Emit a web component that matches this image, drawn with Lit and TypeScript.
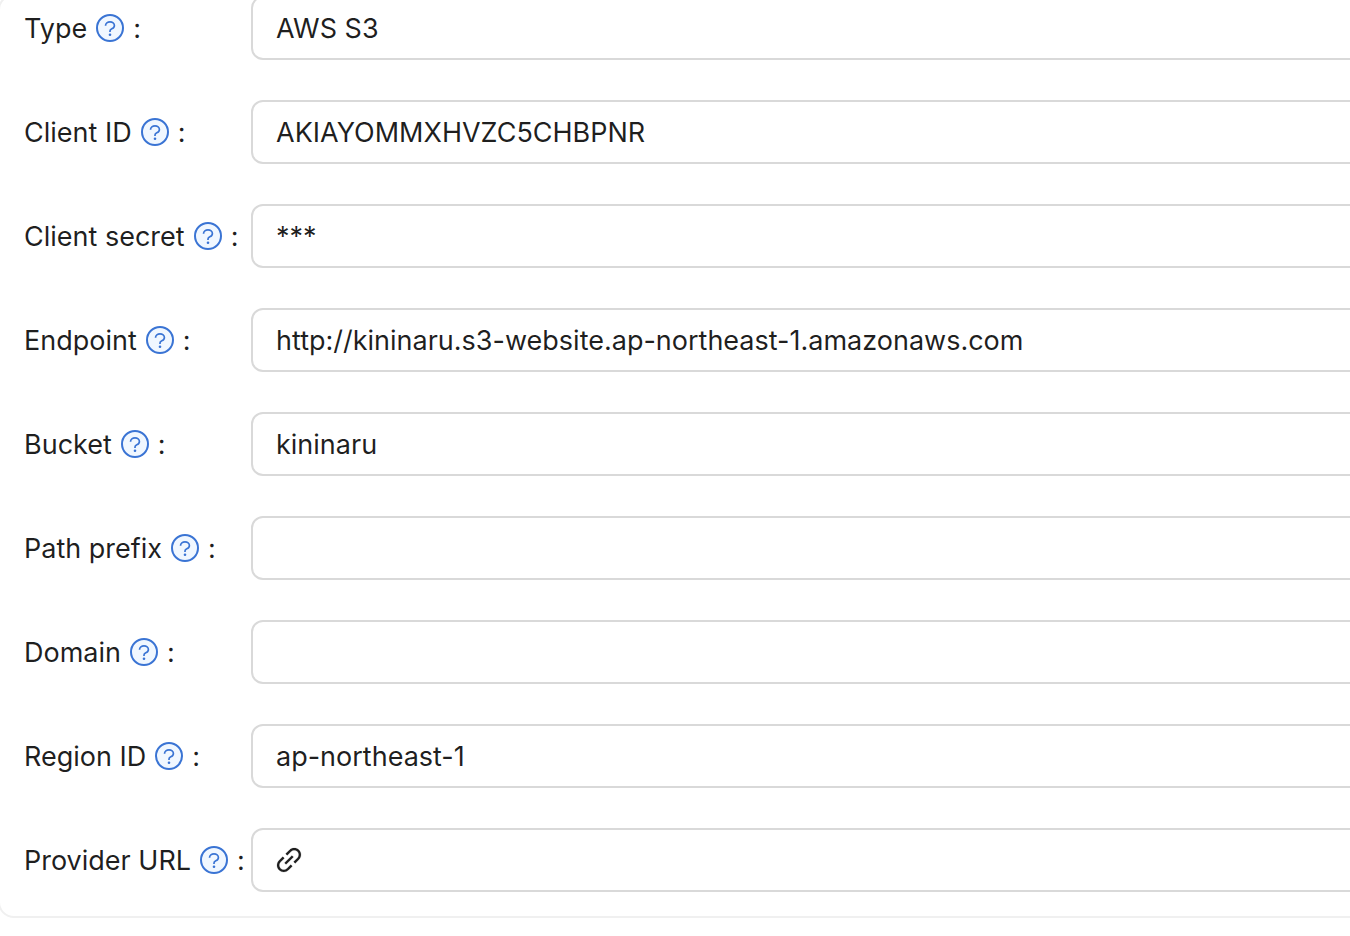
import { LitElement, html, css } from "lit";
import { customElement } from "lit/decorators.js";

interface Field {
  id: string;
  label: string;
  value: string;
  kind?: "select" | "link";
}

const FIELDS: Field[] = [
  { id: "type", label: "Type", value: "AWS S3", kind: "select" },
  { id: "client-id", label: "Client ID", value: "AKIAYOMMXHVZC5CHBPNR" },
  { id: "client-secret", label: "Client secret", value: "***" },
  { id: "endpoint", label: "Endpoint", value: "http://kininaru.s3-website.ap-northeast-1.amazonaws.com" },
  { id: "bucket", label: "Bucket", value: "kininaru" },
  { id: "path-prefix", label: "Path prefix", value: "" },
  { id: "domain", label: "Domain", value: "" },
  { id: "region-id", label: "Region ID", value: "ap-northeast-1" },
  { id: "provider-url", label: "Provider URL", value: "", kind: "link" },
];

@customElement("app-root")
export class AppRoot extends LitElement {
  static styles = css`
    :host {
      display: block;
      overflow: hidden;
      background: #fff;
      color: rgba(0, 0, 0, 0.88);
      font: 27px/45px Inter, "Liberation Sans", sans-serif;
    }
    .card {
      box-sizing: border-box;
      display: grid;
      gap: 40px;
      margin: -6px -24px 0 -2px;
      padding: 0 0 24px 24px;
      border: 2px solid #f0f0f0;
      border-radius: 16px;
    }
    .row {
      display: grid;
      grid-template-columns: 227px 1fr;
      align-items: center;
    }
    .label {
      display: flex;
      align-items: center;
      gap: 9px;
      white-space: nowrap;
    }
    .help {
      flex: none;
      display: block;
      width: 28px;
      height: 28px;
    }
    .box {
      box-sizing: border-box;
      display: flex;
      align-items: center;
      width: 100%;
      height: 64px;
      margin: 0;
      padding: 0 23px;
      border: 2px solid #d9d9d9;
      border-radius: 12px;
      background: #fff;
      color: inherit;
      font: inherit;
      outline: none;
      appearance: none;
    }
    .link {
      width: 26px;
      height: 28px;
    }
  `;

  private help() {
    return html`<svg class="help" viewBox="0 0 28 28" fill="none" aria-hidden="true">
      <circle cx="14" cy="14" r="13" fill="#f0f7ff" stroke="#3a74d4" stroke-width="2" />
      <path d="M9.600 11.700v-.4c0-2 2-3.400 4.400-3.400s4.400 1.500 4.400 3.600c0 1.500-1 2.700-2.600 3.300-1.200.5-1.800 1.200-1.800 2.300v1" stroke="#3a74d4" stroke-width="1.700" />
      <circle cx="14" cy="20.700" r="1.300" fill="#3a74d4" />
    </svg>`;
  }

  private control(f: Field) {
    if (f.kind === "select") {
      return html`<select class="box" id=${f.id}><option>${f.value}</option></select>`;
    }
    if (f.kind === "link") {
      return html`<a class="box" id=${f.id} href="#" aria-label=${f.label}>
        <svg class="link" viewBox="96 64 832 896" fill="currentColor" stroke="currentColor" stroke-width="5" aria-hidden="true">
          <path d="M574 665.4a8.03 8.03 0 00-11.3 0L446.500 781.600c-53.800 53.800-144.600 59.500-204 0-59.500-59.500-53.800-150.200 0-204l116.200-116.200c3.100-3.100 3.100-8.200 0-11.300l-39.800-39.800a8.030 8.030 0 00-11.300 0L191.400 526.500c-84.600 84.600-84.600 221.500 0 306s221.500 84.600 306 0l116.200-116.200c3.100-3.100 3.100-8.200 0-11.300L574 665.400zm258.600-474c-84.600-84.600-221.500-84.600-306 0L410.300 307.600a8.030 8.030 0 000 11.300l39.700 39.700c3.100 3.100 8.200 3.100 11.300 0l116.200-116.200c53.800-53.800 144.600-59.500 204 0 59.500 59.500 53.800 150.200 0 204L665.300 562.600a8.030 8.030 0 000 11.300l39.800 39.800c3.100 3.100 8.200 3.100 11.300 0l116.200-116.200c84.500-84.600 84.500-221.500 0-306.100zM610.100 372.300a8.030 8.030 0 00-11.300 0L372.300 598.700a8.030 8.030 0 000 11.300l39.600 39.600c3.100 3.100 8.200 3.100 11.300 0l226.400-226.400c3.100-3.100 3.100-8.200 0-11.300l-39.500-39.600z" />
        </svg>
      </a>`;
    }
    return html`<input class="box" id=${f.id} type="text" .value=${f.value} />`;
  }

  render() {
    return html`<form class="card">
      ${FIELDS.map(
        (f) => html`<div class="row">
          <label class="label" for=${f.id}><span>${f.label}</span>${this.help()}<span>:</span></label>
          ${this.control(f)}
        </div>`
      )}
    </form>`;
  }
}
